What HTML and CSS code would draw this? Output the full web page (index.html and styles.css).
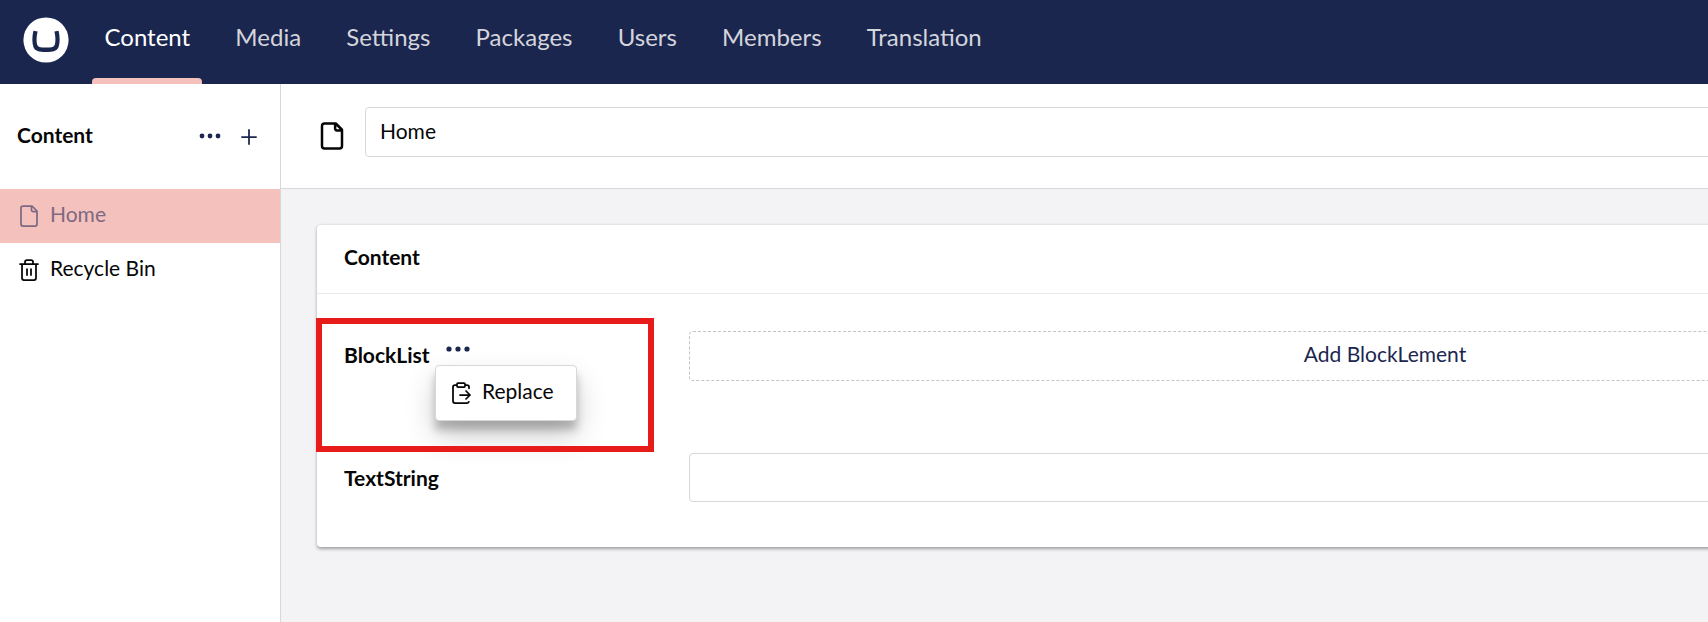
FILE: index.html
```html
<!DOCTYPE html>
<html lang="en">
<head>
<meta charset="utf-8">
<title>Content</title>
<link rel="stylesheet" href="styles.css">
</head>
<body>
<header class="topbar">
  <svg class="logo" viewBox="0 0 46 46"><circle cx="23" cy="23" r="22.6" fill="#fff"/><path d="M10.400 13.800 L14.600 14.400 C13.400 19 13.300 24 14 27 C14.600 30 17 30.500 23 30.500 C29 30.500 31.400 30 32 27 C32.700 24 32.600 19 31.400 14.400 L35.600 13.800 C37 20 37 26 35.600 30 C34.300 34 30 35.100 23 35.100 C16 35.100 11.700 34 10.400 30 C9 26 9 20 10.400 13.800Z" fill="#1b264f"/></svg>
  <nav class="sections">
    <a class="section active">Content</a>
    <a class="section">Media</a>
    <a class="section">Settings</a>
    <a class="section">Packages</a>
    <a class="section">Users</a>
    <a class="section">Members</a>
    <a class="section">Translation</a>
  </nav>
</header>
<div class="layout">
  <aside class="sidebar">
    <div class="sidebar-head">
      <strong>Content</strong>
      <svg class="dots" viewBox="0 0 22 6"><circle cx="3" cy="3" r="2.400"/><circle cx="11" cy="3" r="2.400"/><circle cx="19" cy="3" r="2.400"/></svg>
      <svg class="plus" viewBox="0 0 16 16"><path d="M8 .3v15.400M.3 8h15.400"/></svg>
    </div>
    <a class="tree-item selected">
      <svg class="icon" viewBox="0 0 24 24"><path d="M15 2H6a2 2 0 0 0-2 2v16a2 2 0 0 0 2 2h12a2 2 0 0 0 2-2V7ZM14.500 2v4a1.500 1.500 0 0 0 1.500 1.500h4"/></svg>
      <span>Home</span>
    </a>
    <a class="tree-item">
      <svg class="icon" viewBox="0 0 24 24"><path d="M3 6h18M19 6v14a2 2 0 0 1-2 2H7a2 2 0 0 1-2-2V6M8 6V4a2 2 0 0 1 2-2h4a2 2 0 0 1 2 2v2M10 11v6M14 11v6"/></svg>
      <span>Recycle Bin</span>
    </a>
  </aside>
  <main class="editor">
    <div class="editor-head">
      <svg class="doc-icon" viewBox="0 0 24 24"><path d="M15 2H6a2 2 0 0 0-2 2v16a2 2 0 0 0 2 2h12a2 2 0 0 0 2-2V7ZM14.500 2v4a1.500 1.500 0 0 0 1.500 1.500h4"/></svg>
      <div class="name-input">Home</div>
    </div>
    <div class="workspace">
      <section class="card">
        <h2 class="card-head">Content</h2>
        <div class="card-body">
          <div class="property">
            <div class="label label-menu">
              BlockList
              <svg class="label-dots" viewBox="0 0 24 6"><circle cx="3" cy="3" r="2.600"/><circle cx="12" cy="3" r="2.600"/><circle cx="21" cy="3" r="2.600"/></svg>
              <div class="popover">
                <svg class="icon" viewBox="0 0 24 24"><path d="M9 2h6a1 1 0 0 1 1 1v2a1 1 0 0 1-1 1H9a1 1 0 0 1-1-1V3a1 1 0 0 1 1-1ZM8 4H6a2 2 0 0 0-2 2v14a2 2 0 0 0 2 2h12a2 2 0 0 0 1.793-1.113M16 4h2a2 2 0 0 1 2 2v1.344M11 14h10M17 18l4-4-4-4"/></svg>
                <span>Replace</span>
              </div>
            </div>
            <div class="add-block">Add BlockLement</div>
          </div>
          <div class="property">
            <div class="label">TextString</div>
            <div class="text-input"></div>
          </div>
        </div>
        <div class="highlight"></div>
      </section>
    </div>
  </main>
</div>
</body>
</html>
```

FILE: styles.css
```css
* { box-sizing: border-box; }
body {
  margin: 0;
  height: 622px;
  overflow: hidden;
  display: flex;
  flex-direction: column;
  font-family: Lato, "Liberation Sans", sans-serif;
  font-size: 21px;
  line-height: 30px;
  color: #060606;
  background: #fff;
}
svg { display: block; flex: none; }
.topbar {
  flex: none;
  height: 84px;
  display: flex;
  align-items: stretch;
  padding-left: 22.5px;
  background: #1b264f;
}
.logo { width: 46px; height: 46px; margin-top: 16.5px; }
.sections { display: flex; margin-left: 23.5px; gap: 21.2px; }
.section {
  position: relative;
  padding: 22px 11.5px 0 12.5px;
  font-size: 24px;
  color: #d4d5dc;
}
.section.active { color: #fff; }
.section.active::after {
  content: "";
  position: absolute;
  left: 0;
  right: 0;
  bottom: 0;
  height: 6px;
  background: #f5c1bc;
  border-radius: 4px 4px 0 0;
}
.layout { flex: 1; display: flex; min-height: 0; }
.sidebar { flex: none; width: 281px; border-right: 1px solid #d8d7d9; }
.sidebar-head {
  height: 105px;
  display: flex;
  align-items: center;
  padding: 0 23px 3px 17px;
}
.sidebar-head strong { margin-right: auto; }
.dots { width: 22px; height: 6px; fill: #1b264f; margin: 1px 20px 0 0; }
.plus { width: 16px; height: 16px; margin-top: 3px; fill: none; stroke: #1b264f; stroke-width: 1.75; }
.icon, .doc-icon {
  fill: none;
  stroke: currentColor;
  stroke-width: 1.75;
  stroke-linecap: round;
  stroke-linejoin: round;
}
.icon { width: 24px; height: 24px; }
.tree-item {
  height: 54px;
  display: flex;
  align-items: center;
  gap: 9px;
  padding-left: 17px;
}
.tree-item span { padding-bottom: 4px; }
.selected { background: #f5c1bc; color: #7d6a82; }
.editor { flex: 1; min-width: 0; display: flex; flex-direction: column; overflow: hidden; }
.editor-head {
  flex: none;
  width: 1853px;
  height: 105px;
  display: flex;
  padding: 23px 26px 0 36px;
  border-bottom: 1px solid #d8d7d9;
}
.doc-icon { width: 30px; height: 30px; margin: 14px 18px 0 0; stroke-width: 2; }
.name-input {
  flex: 1;
  height: 50px;
  padding: 8px 14px;
  border: 1px solid #d8d7d9;
  border-radius: 4px;
}
.workspace { flex: 1; padding: 36px; background: #f3f3f5; }
.card {
  position: relative;
  width: 1791px;
  height: 322px;
  background: #fff;
  border-radius: 4px;
  box-shadow: 0 1.5px 4.5px rgba(0,0,0,.12), 0 1.5px 3px rgba(0,0,0,.24);
}
.card-head {
  margin: 0;
  height: 69px;
  padding: 17px 27px 0;
  font-size: 21px;
  line-height: 30px;
  border-bottom: 1px solid #e9e9eb;
}
.card-body { padding: 37px 27px 0; display: flex; flex-direction: column; gap: 72px; }
.property { display: grid; grid-template-columns: 345px 1fr; }
.label { position: relative; display: flex; padding-top: 10px; font-weight: 700; }
.label-menu { padding-top: 9px; }
.label-dots { width: 24px; height: 6px; margin: 6px 0 0 16.5px; fill: #1b264f; }
.add-block {
  height: 50px;
  border: 1px dashed #c4c4c4;
  border-radius: 4px;
  padding-top: 7px;
  text-align: center;
  color: #1b264f;
}
.text-input { height: 49px; border: 1px solid #d8d7d9; border-radius: 4px; }
.popover {
  position: absolute;
  left: 91px;
  top: 34px;
  width: 142px;
  height: 56px;
  display: flex;
  align-items: center;
  gap: 9px;
  padding: 0 0 1px 13px;
  font-weight: 400;
  background: #fff;
  border: 1px solid #d8d7d9;
  border-radius: 4px;
  box-shadow: 0 15px 30px rgba(0,0,0,.19), 0 9px 9px rgba(0,0,0,.23);
}
.popover span { padding-bottom: 3px; }
.highlight {
  position: absolute;
  left: -1px;
  top: 93px;
  width: 338px;
  height: 134px;
  border: 6px solid #e81b1b;
}
```
